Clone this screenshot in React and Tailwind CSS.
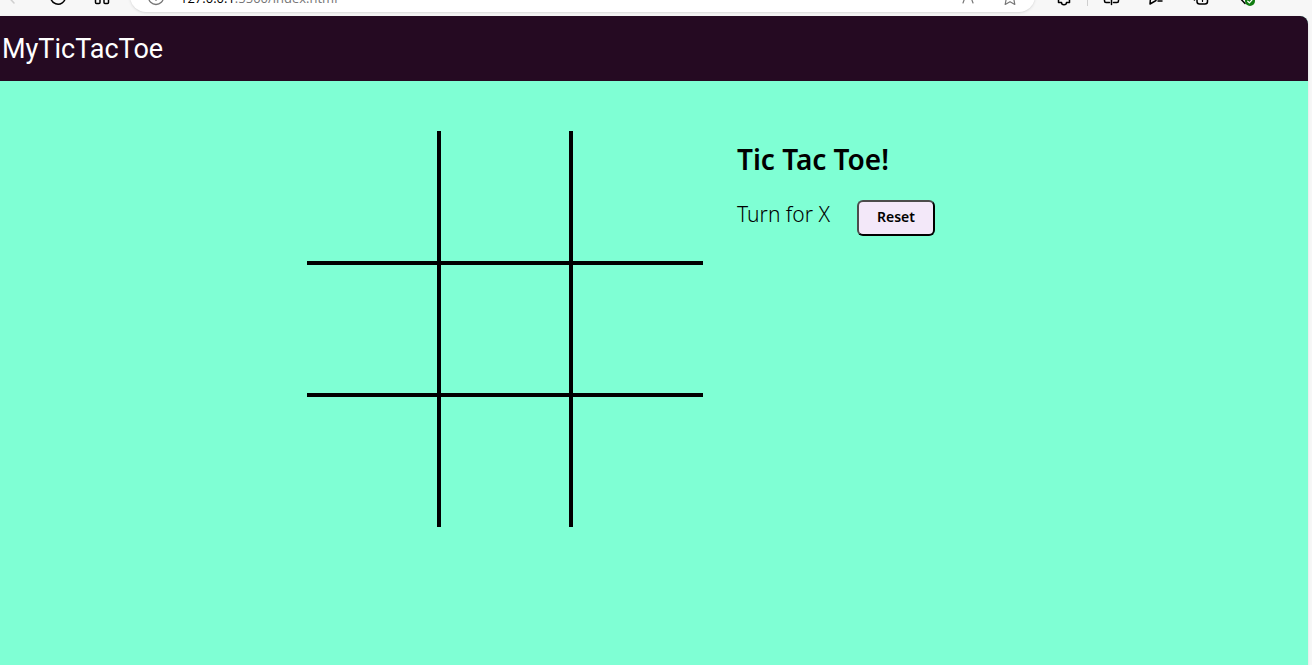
import { useState } from "react";

const LINES = [
  [0, 1, 2],
  [3, 4, 5],
  [6, 7, 8],
  [0, 3, 6],
  [1, 4, 7],
  [2, 5, 8],
  [0, 4, 8],
  [2, 4, 6],
];

const CELL_BORDERS = [
  "border-r-2 border-b-2",
  "border-x-2 border-b-2",
  "border-l-2 border-b-2",
  "border-r-2 border-y-2",
  "border-2",
  "border-l-2 border-y-2",
  "border-r-2 border-t-2",
  "border-x-2 border-t-2",
  "border-l-2 border-t-2",
];

function Icon({ className = "text-black", children }) {
  return (
    <svg
      viewBox="0 0 20 20"
      fill="none"
      stroke="currentColor"
      strokeWidth="1.5"
      strokeLinecap="round"
      strokeLinejoin="round"
      aria-hidden="true"
      className={`size-5 shrink-0 ${className}`}
    >
      {children}
    </svg>
  );
}

function ToolButton({ label, className, children }) {
  return (
    <button
      type="button"
      aria-label={label}
      className={`flex h-8 shrink-0 items-center ${className}`}
    >
      {children}
    </button>
  );
}

function BrowserBar() {
  return (
    <div className="flex h-4 items-end overflow-hidden bg-[#f7f7f7]">
      <div className="mb-1 flex h-8 flex-1 items-center">
        <ToolButton label="Back" className="w-9 pl-1">
          <Icon className="text-[#cfcfcf]">
            <path d="M17 10H4M10 3.5 3.5 10l6.500 7" />
          </Icon>
        </ToolButton>
        <ToolButton label="Refresh" className="w-11 justify-center">
          <Icon>
            <path d="M17.500 11a7.500 7.500 0 1 1-2-5.500M16 1.500V5.500h-4" />
          </Icon>
        </ToolButton>
        <ToolButton label="Apps" className="w-11 justify-center">
          <Icon>
            <rect x="3.500" y="3" width="4.500" height="5" rx="1" />
            <rect x="12" y="3" width="4.500" height="5" rx="1" />
            <rect x="3.500" y="11" width="4.500" height="6.500" rx="1" />
            <rect x="12" y="11" width="4.500" height="6.500" rx="1" />
          </Icon>
        </ToolButton>

        <div className="ml-1.5 flex h-8 flex-1 items-center rounded-full bg-white px-4 shadow-sm">
          <Icon className="text-[#767676]">
            <circle cx="10" cy="11" r="7.500" strokeWidth="1.300" />
            <path d="M10 10v4.500" strokeWidth="1.200" />
          </Icon>
          <a
            href="#board"
            className="ml-3.5 flex-1 pt-1 font-['Open_Sans',sans-serif] text-[13px] leading-5 text-[#767676]"
          >
            <span className="text-black">127.0.0.1</span>:5500/index.html
          </a>
          <Icon className="text-[#767676]">
            <path d="m6 17 5-14 5 14M8 12h6" strokeWidth="1.200" />
          </Icon>
          <Icon className="ml-[22px] text-[#767676]">
            <path
              d="M11 1.500l2.300 5 5.200.8-4 4.100 1.300 7-4.800-2.700-4.800 2.700 1.300-7-4-4.100 5.200-.8z"
              strokeWidth="1.200"
            />
          </Icon>
        </div>

        <ToolButton label="Extensions" className="ml-1.5 w-[46px] justify-center">
          <Icon>
            <path d="M4.500 4h3a2.500 2.500 0 0 1 5 0h3v12.500h-3c0 3-5 3-5 0h-3z" />
          </Icon>
        </ToolButton>
        <div className="h-5 w-px bg-[#cfcfcf]" />
        <ToolButton label="Split screen" className="w-[45px] justify-center">
          <Icon>
            <path d="M8 3.500H5.500a2 2 0 0 0-2 2V15A1.500 1.500 0 0 0 5 16.500h3.500M13 3.500h2.500a2 2 0 0 1 2 2V15a1.500 1.500 0 0 1-1.500 1.500h-3.500M10.500 1.500v17" />
          </Icon>
        </ToolButton>
        <ToolButton label="Favorites" className="w-[45px] justify-center">
          <Icon>
            <path d="M9 2 6.500 7 2 8l2.500 4L4 18l6-3.500M13 11h6M12 15h4" />
          </Icon>
        </ToolButton>
        <ToolButton label="Collections" className="w-[45px] justify-center">
          <Icon>
            <path d="M3.500 14C2 13 2 12 2 10V5.500C2 3.500 3 3 5 3h7" />
            <rect x="6" y="6" width="10.500" height="12" rx="2.500" />
            <path d="M11.500 9.500v6M9.500 12.500h4" strokeWidth="1.200" />
          </Icon>
        </ToolButton>
        <ToolButton label="Browser essentials" className="mr-11 w-[45px] justify-center">
          <Icon>
            <path d="M9 17.500 2 10C-1 4 6 0 9.500 5c3.500-5 10.500-1 7.500 5" />
            <circle cx="14" cy="15" r="5" fill="#107c10" stroke="none" />
            <path d="m11.700 15.200 1.700 1.600 3-3.300" stroke="#fff" strokeWidth="1.200" />
          </Icon>
        </ToolButton>
      </div>
    </div>
  );
}

export default function App() {
  const [cells, setCells] = useState(Array(9).fill(""));
  const turn = cells.filter(Boolean).length % 2 === 0 ? "X" : "O";
  const won = LINES.find(([a, b, c]) => cells[a] && cells[a] === cells[b] && cells[a] === cells[c]);
  const status = won ? `${cells[won[0]]} won` : `Turn for ${turn}`;

  const play = (index) => {
    if (cells[index] || won) return;
    setCells(cells.map((value, i) => (i === index ? turn : value)));
  };

  return (
    <div className="flex min-h-screen flex-col bg-[#f7f7f7]">
      <BrowserBar />
      <div className="mr-1 flex flex-1 flex-col overflow-hidden rounded-tr-lg bg-[#7fffd4] text-black shadow-sm">
        <nav className="flex h-[65px] items-center bg-[#250a22] px-0.5 pt-0.5 font-[Roboto,sans-serif] text-[27px] text-white">
          MyTicTacToe
        </nav>
        <main className="flex flex-wrap justify-center gap-[34px] pt-[50px] font-['Noto_Sans',sans-serif]">
          <div id="board" className="grid grid-cols-[132px_132px_132px] grid-rows-[132px_132px_132px]">
            {cells.map((value, index) => (
              <button
                key={index}
                type="button"
                aria-label={`Cell ${index + 1}`}
                onClick={() => play(index)}
                className={`flex items-center justify-center border-black text-6xl ${CELL_BORDERS[index]}`}
              >
                {value}
              </button>
            ))}
          </div>
          <section className="w-[264px] pt-2">
            <h1 className="text-[28px] leading-10 font-semibold">Tic Tac Toe!</h1>
            <div className="mt-[21px] flex items-start gap-[27px]">
              <span className="text-[21px] leading-7 font-light">{status}</span>
              <button
                type="button"
                onClick={() => setCells(Array(9).fill(""))}
                className="rounded-md border-2 border-t-[#4c4c4c] border-r-black border-b-black border-l-[#4c4c4c] bg-[#f3e8f9] px-[18px] pt-[5px] pb-[7px] text-sm leading-5 font-semibold"
              >
                Reset
              </button>
            </div>
          </section>
        </main>
      </div>
    </div>
  );
}
